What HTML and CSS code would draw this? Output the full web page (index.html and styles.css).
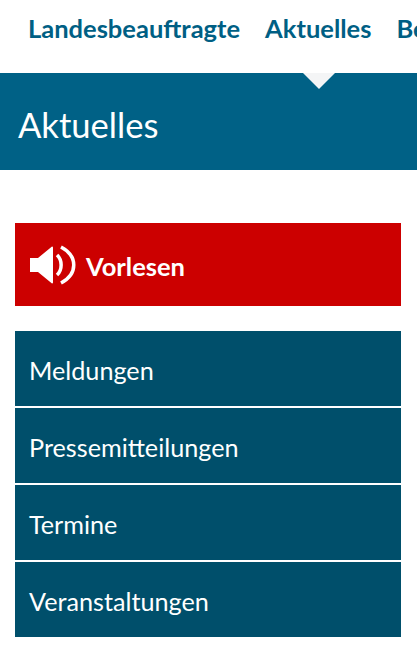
FILE: index.html
```html
<!DOCTYPE html>
<html lang="de">
<head>
<meta charset="utf-8">
<title>Aktuelles</title>
<link rel="stylesheet" href="styles.css">
</head>
<body>
<header class="topnav">
  <nav class="topnav-list">
    <a class="topnav-link" href="#">Landesbeauftragte</a>
    <a class="topnav-link" href="#">Aktuelles</a>
    <a class="topnav-link" href="#">Beratung</a>
  </nav>
</header>
<section class="band">
  <span class="band-marker"></span>
  <h1 class="band-title">Aktuelles</h1>
</section>
<main class="content">
  <a class="readout" href="#">
    <svg class="readout-icon" viewBox="0 0 46 40" width="46" height="40" aria-hidden="true">
      <path class="icon-fill" d="M0 13h8L22 1.500q1 0 1 1v35q0 1-1 1L8 27H0z"/>
      <path class="icon-stroke" d="M27 10c5.500 5 5.500 15 0 20"/>
      <path class="icon-stroke" d="M31 2c17 9 17 27 0 36"/>
    </svg>
    <span class="readout-label">Vorlesen</span>
  </a>
  <ul class="menu">
    <li class="menu-item"><a href="#">Meldungen</a></li>
    <li class="menu-item"><a href="#">Pressemitteilungen</a></li>
    <li class="menu-item"><a href="#">Termine</a></li>
    <li class="menu-item"><a href="#">Veranstaltungen</a></li>
  </ul>
</main>
</body>
</html>
```
FILE: styles.css
```css
* { box-sizing: border-box; }
html, body { margin: 0; padding: 0; }
body {
  width: 417px;
  height: 655px;
  overflow: hidden;
  background: #fff;
  font-family: "Lato", "Open Sans", sans-serif;
}
a { text-decoration: none; color: inherit; }
.topnav { height: 73px; padding: 13px 0 0 28px; overflow: hidden; }
.topnav-list { display: flex; gap: 25px; white-space: nowrap; }
.topnav-link { font-size: 25.5px; line-height: 30px; font-weight: 700; color: #005f84; }
.band {
  position: relative;
  height: 97px;
  background: #006186;
  padding: 30px 0 0 18px;
}
.band-marker {
  position: absolute;
  left: 303px;
  top: 0;
  border-left: 16px solid transparent;
  border-right: 16px solid transparent;
  border-top: 16px solid #f4f5f6;
}
.band-title { margin: 0; font-size: 34.6px; line-height: 44px; font-weight: 400; color: #fff; }
.content { padding: 53px 16px 0 15px; }
.readout {
  display: flex;
  align-items: center;
  gap: 10px;
  height: 83px;
  padding-left: 15px;
  background: #cc0000;
  color: #fff;
}
.icon-fill { fill: #fff; }
.icon-stroke { fill: none; stroke: #fff; stroke-width: 3.500; stroke-linecap: butt; }
.readout-label { font-size: 25.5px; line-height: 30px; font-weight: 700; padding-top: 2px; }
.menu {
  list-style: none;
  margin: 25px 0 0;
  padding: 0;
  display: flex;
  flex-direction: column;
  gap: 2px;
}
.menu-item {
  display: flex;
  align-items: center;
  height: 75px;
  padding: 2px 0 0 14px;
  background: #004f6b;
  color: #fff;
  font-size: 25.2px;
  font-weight: 400;
}
```
